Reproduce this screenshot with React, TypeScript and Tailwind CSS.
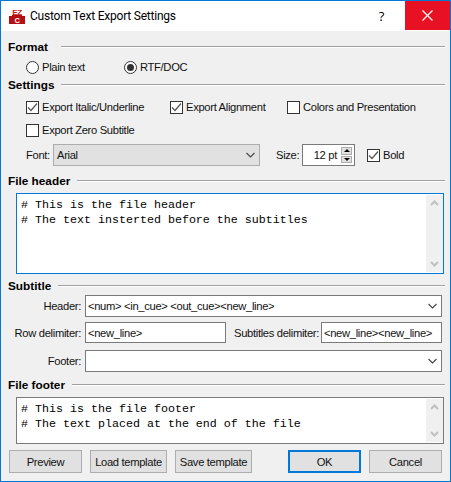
import React from "react";

const Heading = ({ children, className, labelClass }: { children: React.ReactNode; className: string; labelClass?: string }) => (
  <div className={`flex items-center gap-[7px] pl-[7px] pr-[5px] ${className}`}>
    <span className={`font-bold text-[11.8px] tracking-normal leading-[16px] text-black ${labelClass ?? ""}`}>{children}</span>
    <div className="flex-1 h-[2px] border-t border-t-[#a0a0a0] border-b border-b-white" />
  </div>
);

const Check = ({ label, checked, className }: { label: string; checked?: boolean; className?: string }) => (
  <div className={`flex items-center gap-[3px] ${className ?? ""}`}>
    <div className="w-[13px] h-[13px] border border-[#333333] bg-white flex items-center justify-center">
      {checked && (
        <svg width="11" height="11" viewBox="0 0 11 11" fill="none">
          <path d="M1 5.5 L4 8.5 L10 1.5" stroke="#555555" strokeWidth="1.2" />
        </svg>
      )}
    </div>
    <span>{label}</span>
  </div>
);

const Radio = ({ label, checked, className }: { label: string; checked?: boolean; className?: string }) => (
  <div className={`flex items-center gap-[3px] ${className ?? ""}`}>
    <div className="w-[13px] h-[13px] rounded-full border border-[#333333] bg-white flex items-center justify-center">
      {checked && <div className="w-[7px] h-[7px] rounded-full bg-[#333333]" />}
    </div>
    <span>{label}</span>
  </div>
);

const Chevron = () => (
  <svg width="9" height="6" viewBox="0 0 9 6" fill="none">
    <path d="M0.5 1 L4.5 5 L8.5 1" stroke="#444444" strokeWidth="1.1" />
  </svg>
);

const ScrollBar = () => (
  <div className="w-[17px] self-stretch my-[1px] bg-[#f0f0f0] flex flex-col justify-between items-center py-[5px]">
    <svg width="9" height="6" viewBox="0 0 9 6" fill="none">
      <path d="M1 5 L4.5 1.5 L8 5" stroke="#c0c0c0" strokeWidth="2" />
    </svg>
    <svg width="9" height="6" viewBox="0 0 9 6" fill="none">
      <path d="M1 1 L4.5 4.5 L8 1" stroke="#c0c0c0" strokeWidth="2" />
    </svg>
  </div>
);

const Combo = ({ value }: { value?: string }) => (
  <div className="ml-[84px] w-[357px] h-[22px] border border-[#7a7a7a] bg-white flex items-center pl-[2px] pr-[4px] justify-between">
    <span>{value}</span>
    <Chevron />
  </div>
);

const Memo = ({ lines, className }: { lines: string[]; className: string }) => (
  <div className={`ml-[15px] w-[428px] bg-white flex ${className}`}>
    <div className="flex-1 pl-[4px] font-['Liberation_Mono',monospace] text-[11.67px] tracking-normal leading-[15px] pt-[4px] text-black">
      {lines.map((l) => (
        <div key={l} className="whitespace-pre">{l}</div>
      ))}
    </div>
    <ScrollBar />
  </div>
);

const Btn = ({ label, className }: { label: string; className: string }) => (
  <div className={`h-[23px] flex items-center justify-center whitespace-nowrap bg-[#e1e1e1] ${className}`}>{label}</div>
);

export default function App() {
  return (
    <div className="w-[451px] h-[482px] border border-[#0078d7] bg-[#f0f0f0] font-['Liberation_Sans',sans-serif] text-[11.2px] tracking-[-0.32px] leading-[14px] text-[#111111] flex flex-col overflow-hidden">
      {/* title bar */}
      <div className="h-[30px] bg-white flex items-center">
        <svg className="ml-[8px]" width="16" height="16" viewBox="0 0 16 16">
          <rect x="0" y="8" width="16" height="8" fill="#b30f14" />
          <rect x="3" y="7" width="10" height="1" fill="#b30f14" />
          <text x="8" y="6.5" textAnchor="middle" fontSize="8" fontWeight="700" fill="#c8161c" fontFamily="Liberation Sans">EZ</text>
          <text x="8" y="14.8" textAnchor="middle" fontSize="7.5" fontWeight="700" fill="#ffffff" fontFamily="Liberation Sans">C</text>
        </svg>
        <span className="ml-[5px] text-[12px] tracking-[-0.22px] text-black font-['Roboto',sans-serif]">Custom Text Export Settings</span>
        <span className="ml-auto mr-[21px] text-[13px] text-black font-['Open_Sans',sans-serif]">?</span>
        <div className="w-[45px] h-[29px] mb-[1px] bg-[#e81123] flex items-center justify-center">
          <svg width="11" height="11" viewBox="0 0 11 11" fill="none">
            <path d="M0.5 0.5 L10.5 10.5 M10.5 0.5 L0.5 10.5" stroke="#ffffff" strokeWidth="1.2" />
          </svg>
        </div>
      </div>

      <Heading className="mt-[8px]" labelClass="w-[46px]">Format</Heading>
      <div className="flex mt-[5px] pl-[25px] h-[14px]">
        <Radio label="Plain text" className="w-[98px]" />
        <Radio label="RTF/DOC" checked />
      </div>

      <Heading className="mt-[3px]" labelClass="w-[46px]">Settings</Heading>
      <div className="flex mt-[7px] pl-[25px] h-[14px]">
        <Check label="Export Italic/Underline" checked className="w-[144px]" />
        <Check label="Export Alignment" checked className="w-[117px]" />
        <Check label="Colors and Presentation" />
      </div>
      <div className="flex mt-[9px] pl-[25px] h-[14px]">
        <Check label="Export Zero Subtitle" />
      </div>

      <div className="flex items-center mt-[7px] pl-[25px] h-[22px]">
        <span className="w-[27px]">Font:</span>
        <div className="w-[207px] h-[22px] bg-[#e1e1e1] border border-[#adadad] flex items-center justify-between pl-[3px] pr-[4px]">
          <span>Arial</span>
          <Chevron />
        </div>
        <span className="ml-[16px] w-[26px]">Size:</span>
        <div className="w-[53px] h-[22px] bg-white border border-[#7a7a7a] flex items-center justify-end pr-[2px]">
          <span className="mr-[4px]">12 pt</span>
          <div className="w-[11px] h-[16px] flex flex-col gap-[1px]">
            <div className="flex-1 bg-[#e1e1e1] border border-[#adadad] flex items-center justify-center">
              <div className="border-x-[3px] border-x-transparent border-b-[3px] border-b-black" />
            </div>
            <div className="flex-1 bg-[#e1e1e1] border border-[#adadad] flex items-center justify-center">
              <div className="border-x-[3px] border-x-transparent border-t-[3px] border-t-black" />
            </div>
          </div>
        </div>
        <Check label="Bold" checked className="ml-[12px]" />
      </div>

      <Heading className="mt-[7px]">File header</Heading>
      <Memo
        className="mt-[4px] h-[81px] border border-[#0078d7]"
        lines={["# This is the file header", "# The text insterted before the subtitles"]}
      />

      <Heading className="mt-[4px]">Subtitle</Heading>
      <div className="relative mt-[1px]">
        <span className="absolute right-[369px] top-[4px]">Header:</span>
        <Combo value="<num> <in_cue> <out_cue><new_line>" />
      </div>

      <div className="flex items-center mt-[5px] h-[21px]">
        <span className="w-[80px] text-right whitespace-nowrap">Row delimiter:</span>
        <div className="ml-[4px] w-[141px] h-[21px] border border-[#7a7a7a] bg-white pl-[2px] flex items-center">&lt;new_line&gt;</div>
        <span className="ml-[8px] w-[87px] whitespace-nowrap">Subtitles delimiter:</span>
        <div className="w-[121px] h-[21px] border border-[#7a7a7a] bg-white pl-[2px] flex items-center whitespace-nowrap">&lt;new_line&gt;&lt;new_line&gt;</div>
      </div>

      <div className="relative mt-[7px]">
        <span className="absolute right-[369px] top-[4px]">Footer:</span>
        <Combo />
      </div>

      <Heading className="mt-[5px]">File footer</Heading>
      <Memo
        className="mt-[4px] h-[47px] border border-[#7a7a7a]"
        lines={["# This is the file footer", "# The text placed at the end of the file"]}
      />

      <div className="flex mt-[6px] pl-[8px]">
        <Btn label="Preview" className="w-[73px] border border-[#adadad]" />
        <Btn label="Load template" className="ml-[8px] w-[77px] border border-[#adadad]" />
        <Btn label="Save template" className="ml-[8px] w-[77px] border border-[#adadad]" />
        <Btn label="OK" className="ml-[36px] w-[73px] border-2 border-[#0078d7]" />
        <Btn label="Cancel" className="ml-[8px] w-[73px] border border-[#adadad]" />
      </div>
    </div>
  );
}
